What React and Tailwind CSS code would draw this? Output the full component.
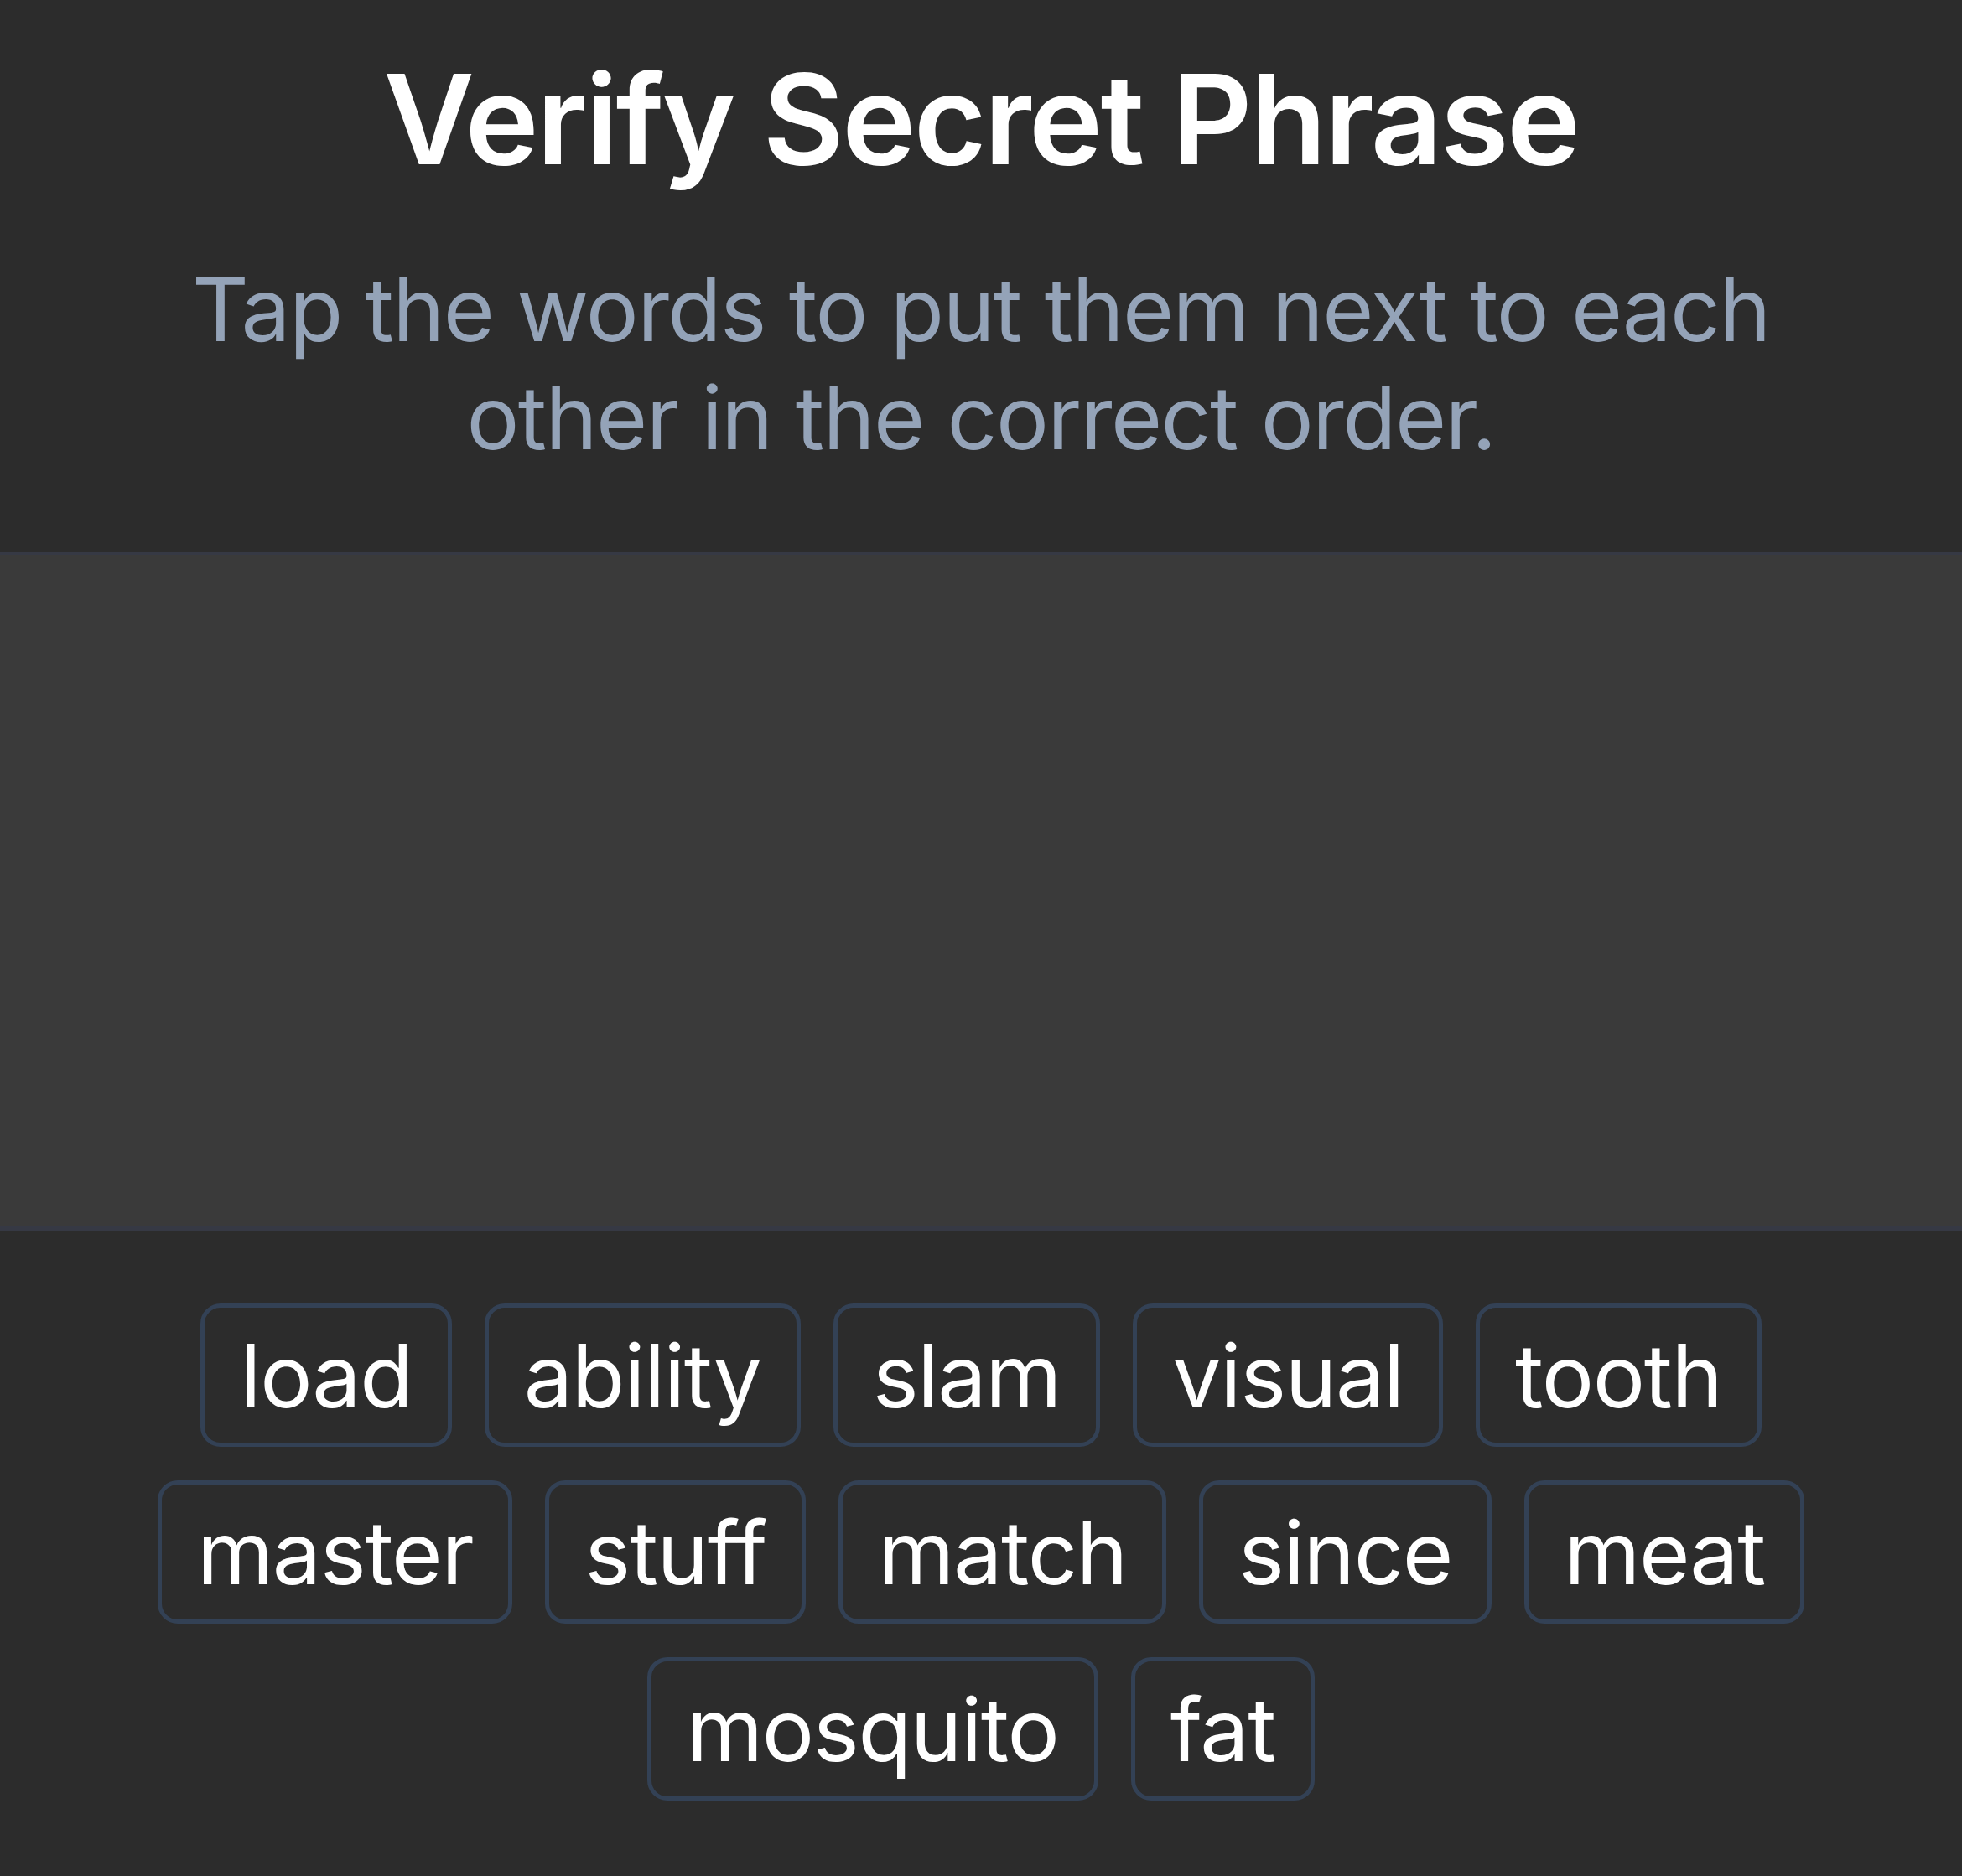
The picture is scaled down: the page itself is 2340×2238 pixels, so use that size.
import React from "react";

const rows = [
  ["load", "ability", "slam", "visual", "tooth"],
  ["master", "stuff", "match", "since", "meat"],
  ["mosquito", "fat"],
];

function Chip({ word }) {
  return (
    <button
      type="button"
      className="h-[171px] px-[42px] flex items-center justify-center rounded-[24px] border-[5px] border-[#334155] bg-[#2c2c2c] text-white text-[104px] leading-none font-normal tracking-[-1.3px]"
    >
      {word}
    </button>
  );
}

export default function App() {
  return (
    <div
      className="w-[2340px] h-[2238px] bg-[#2c2c2c] flex flex-col overflow-hidden"
      style={{ fontFamily: "Inter, 'Noto Sans', sans-serif" }}
    >
      <header className="h-[658px] flex flex-col items-center pt-[68px] text-center">
        <h1 className="text-[149px] leading-none font-semibold text-white tracking-[-2.6px]">
          Verify Secret Phrase
        </h1>
        <p className="mt-[87px] text-[105px] leading-[129px] text-[#94a3b8] tracking-[-1.6px]">
          Tap the words to put them next to each
          <br />
          other in the correct order.
        </p>
      </header>
      <div className="h-[810px] bg-[#3a3a3a] border-t-[4px] border-b-[6px] border-[#363944]" />
      <div className="flex flex-col items-center gap-[40px] pt-[87px]">
        {rows.map((row, i) => (
          <div key={i} className="flex justify-center gap-[39px]">
            {row.map((w) => (
              <Chip key={w} word={w} />
            ))}
          </div>
        ))}
      </div>
    </div>
  );
}
